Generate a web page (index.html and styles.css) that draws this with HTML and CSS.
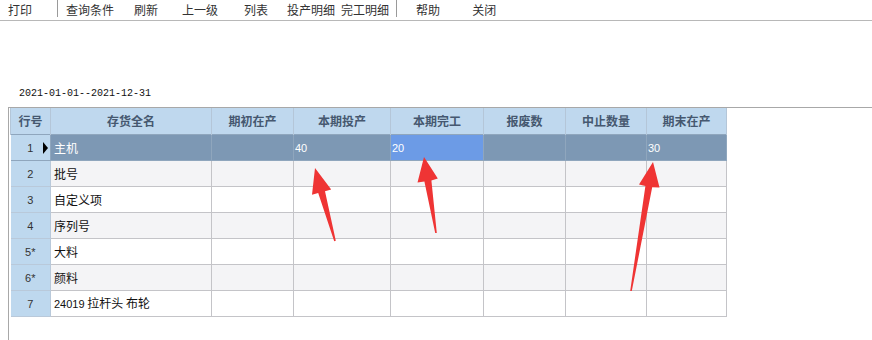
FILE: index.html
```html
<!DOCTYPE html>
<html lang="zh-CN">
<head>
    <meta charset="UTF-8">
    <title>投产完工统计</title>
    <link rel="stylesheet" href="styles.css">
</head>
<body>
    <div class="toolbar">
        <span class="tb-btn first">打印</span>
        <span class="tb-sep"></span>
        <span class="tb-btn after-sep">查询条件</span>
        <span class="tb-btn">刷新</span>
        <span class="tb-btn up">上一级</span>
        <span class="tb-btn list">列表</span>
        <span class="tb-btn">投产明细</span>
        <span class="tb-btn tight">完工明细</span>
        <span class="tb-sep near"></span>
        <span class="tb-btn">帮助</span>
        <span class="tb-btn wide">关闭</span>
    </div>

    <div class="range">2021-01-01--2021-12-31</div>

    <div class="frame">
        <table class="grid">
            <colgroup>
                <col class="c-rn">
                <col class="c-name">
                <col class="c-82">
                <col class="c-97">
                <col class="c-93">
                <col class="c-82">
                <col class="c-81">
                <col class="c-80">
            </colgroup>
            <thead>
                <tr>
                    <th>行号</th>
                    <th>存货全名</th>
                    <th>期初在产</th>
                    <th>本期投产</th>
                    <th>本期完工</th>
                    <th>报废数</th>
                    <th>中止数量</th>
                    <th>期末在产</th>
                </tr>
            </thead>
            <tbody>
                <tr class="current">
                    <td class="rn">1<span class="marker"></span></td>
                    <td>主机</td>
                    <td></td>
                    <td class="num">40</td>
                    <td class="num focus">20</td>
                    <td></td>
                    <td></td>
                    <td class="num">30</td>
                </tr>
                <tr class="alt">
                    <td class="rn">2</td>
                    <td>批号</td>
                    <td></td><td></td><td></td><td></td><td></td><td></td>
                </tr>
                <tr>
                    <td class="rn">3</td>
                    <td>自定义项</td>
                    <td></td><td></td><td></td><td></td><td></td><td></td>
                </tr>
                <tr class="alt">
                    <td class="rn">4</td>
                    <td>序列号</td>
                    <td></td><td></td><td></td><td></td><td></td><td></td>
                </tr>
                <tr>
                    <td class="rn">5*</td>
                    <td>大料</td>
                    <td></td><td></td><td></td><td></td><td></td><td></td>
                </tr>
                <tr class="alt">
                    <td class="rn">6*</td>
                    <td>颜料</td>
                    <td></td><td></td><td></td><td></td><td></td><td></td>
                </tr>
                <tr>
                    <td class="rn">7</td>
                    <td><span class="code">24019</span> 拉杆头 布轮</td>
                    <td></td><td></td><td></td><td></td><td></td><td></td>
                </tr>
            </tbody>
        </table>
    </div>

    <!-- annotation arrows drawn over the grid -->
    <svg class="arrows" width="872" height="340" viewBox="0 0 872 340">
        <polygon points="315,168 331.2,189.5 325,191.2 335.8,240.8 334.2,241.2 318.2,193 312,194.7"/>
        <polygon points="424,157 437.8,178.5 431.4,180.5 436.8,232.9 435.2,233.1 424.4,181.5 417.5,182.5"/>
        <polygon points="653,162 659.5,187.5 652.2,187.2 631.8,291.1 630.2,290.9 645.4,186 639,184.5"/>
    </svg>
</body>
</html>
```

FILE: styles.css
```css
body {
    margin: 0;
    background: #fff;
    font-family: "Noto Sans CJK SC", "Liberation Sans", sans-serif;
    font-size: 12px;
    color: #111;
    position: relative;
    height: 340px;
    overflow: hidden;
}
.toolbar {
    display: flex;
    align-items: center;
    height: 20px;
    border-bottom: 1px solid #b8b8b8;
    color: #333;
}
.tb-btn {
    margin-left: 20px;
    line-height: 20px;
    white-space: nowrap;
}
.tb-btn.first { margin-left: 8px; }
.tb-btn.after-sep { margin-left: 8px; }
.tb-btn.up { margin-left: 24px; }
.tb-btn.list { margin-left: 26px; }
.tb-btn.list + .tb-btn { margin-left: 19px; }
.tb-btn.tight { margin-left: 6px; }
.tb-btn.wide { margin-left: 32px; }
.tb-sep {
    width: 1px;
    height: 17px;
    margin-left: 25px;
    margin-bottom: 3px;
    background: #9a9a9a;
}
.tb-sep.near { margin-left: 7px; }
.tb-sep.near + .tb-btn { margin-left: 19px; }
.range {
    padding: 67px 0 0 19px;
    height: 12px;
    line-height: 12px;
    font-family: "Liberation Mono", monospace;
    font-size: 10px;
    color: #111;
}
.frame {
    margin: 7px 0 0 8px;
    height: 240px;
    border-top: 1px solid #a8a8a8;
    border-left: 1px solid #a8a8a8;
    padding-left: 1px;
}
.grid {
    border-collapse: collapse;
    table-layout: fixed;
    width: 716px;
}
.c-rn { width: 40px; }
.c-name { width: 161px; }
.c-82 { width: 82px; }
.c-97 { width: 97px; }
.c-93 { width: 93px; }
.c-81 { width: 81px; }
.c-80 { width: 80px; }
.grid th {
    height: 26px;
    padding: 0;
    background: #bfd8ee;
    color: #465870;
    font-weight: bold;
    line-height: 14px;
    border-left: 1px solid #b4c6d8;
    border-right: 1px solid #b4c6d8;
}
.grid td {
    height: 25px;
    padding: 0 3px;
    line-height: 14px;
    border: 1px solid #c4c4c8;
    background: #fff;
    white-space: nowrap;
    overflow: hidden;
}
.grid tr.alt td { background: #f4f4f6; }
.grid tr td.rn {
    position: relative;
    background: #bed8ee;
    text-align: center;
    color: #333;
    font-family: "Liberation Sans", sans-serif;
    font-size: 11px;
    border-left: none;
    border-color: #b9c9da;
}
.grid tr.current td {
    background: #7d98b4;
    color: #fff;
    border-color: #8fa6bd;
}
.grid tr.current td.rn {
    background: #bed8ee;
    color: #333;
}
.grid tr.current td.focus { background: #6c9be6; }
.grid td.num {
    padding-left: 1px;
    font-family: "Liberation Sans", sans-serif;
    font-size: 11px;
}
.code {
    font-family: "Liberation Sans", sans-serif;
    font-size: 11px;
}
.marker {
    position: absolute;
    right: 2px;
    top: 7px;
    width: 0;
    height: 0;
    border-top: 6px solid transparent;
    border-bottom: 6px solid transparent;
    border-left: 5px solid #000;
}
.arrows {
    position: absolute;
    left: 0;
    top: 0;
    pointer-events: none;
}
.arrows polygon { fill: #ef3434; }
```
